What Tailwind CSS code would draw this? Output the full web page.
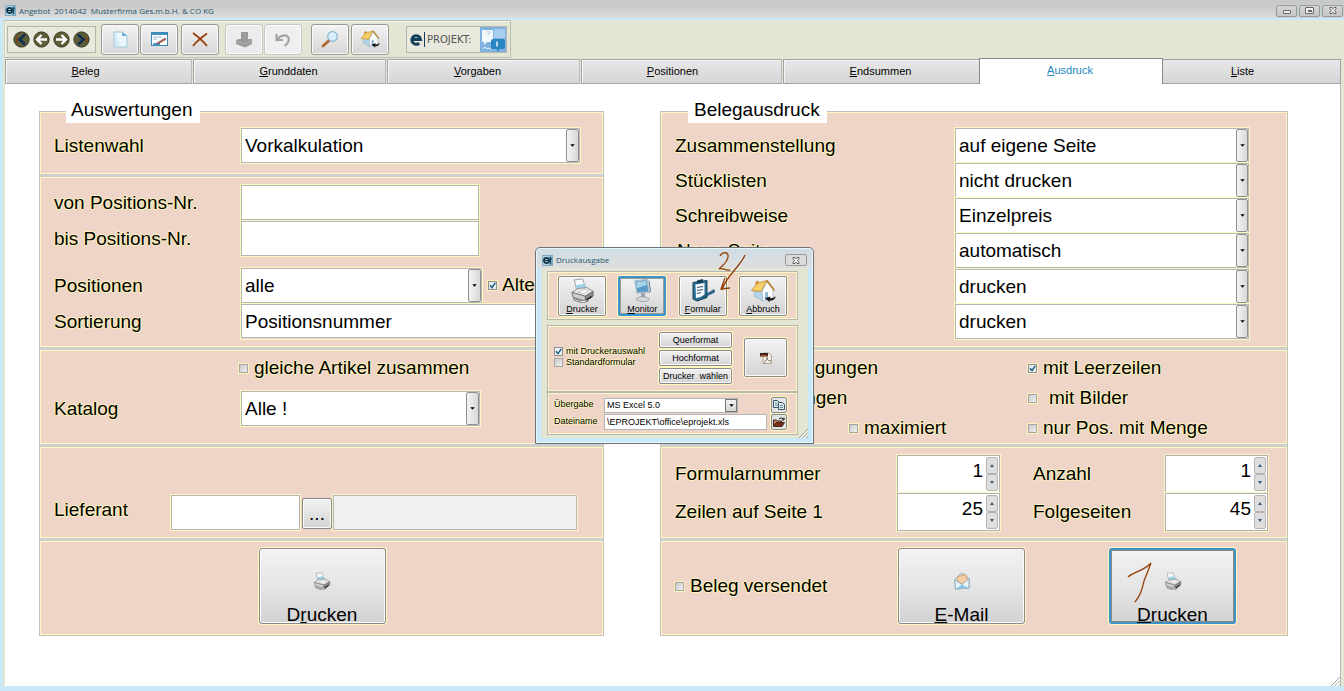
<!DOCTYPE html>
<html lang="de">
<head>
<meta charset="utf-8">
<title>Angebot 2014042 Musterfirma Ges.m.b.H. &amp; CO KG</title>
<script src="https://cdn.jsdelivr.net/npm/@tailwindcss/browser@4"></script>
</head>
<body class="relative flex min-h-screen flex-col overflow-x-hidden bg-[#e4e6d4] font-['Liberation_Sans',Arial,sans-serif] text-[19px] text-black">

<!-- Shared symbols -->
<svg class="hidden" aria-hidden="true">
  <symbol id="app" viewBox="0 0 11 11"><rect width="11" height="11" fill="#7fa9bd"/><rect x="1" y="1" width="6" height="9" fill="#b5d8e8"/><circle cx="4.500" cy="5.500" r="2.600" fill="none" stroke="#0c3347" stroke-width="1.700"/><path d="M2.500 5.500h4.500" stroke="#0c3347" stroke-width="1.200"/><path d="M8.500 2v7M7.500 4h2.500" stroke="#0f4a68" stroke-width="1"/></symbol>
  <symbol id="tick" viewBox="0 0 9 9"><path d="M2 4.300 4 6.600 7.300 1.800" fill="none" stroke="#1f5f80" stroke-width="1.500"/></symbol>
  <symbol id="down" viewBox="0 0 6 4"><path d="M0 .3h6L3 3.700z" fill="#000"/></symbol>
  <symbol id="printer" viewBox="0 0 26 26">
    <path d="M4.500 2 13 1l4 11-10 1z" fill="#f4f9fc" stroke="#8a8f94" stroke-width=".8"/>
    <path d="M6 7.500 14.800 6l2.200 6-9.500 1z" fill="#9fd0ec"/>
    <path d="M2 15 8 11l10-1 6 4-8 5z" fill="#e9e9e9" stroke="#777" stroke-width=".8"/>
    <path d="M2 15l14 4v5L3 20z" fill="#cfcfcf" stroke="#666" stroke-width=".8"/>
    <path d="M16 19l8-5v5l-8 5z" fill="#8c8c8c" stroke="#555" stroke-width=".8"/>
    <path d="M4 21l7 3 5-1 3 1-6 2-9-3z" fill="#fff" stroke="#555" stroke-width=".8"/>
    <path d="M8 14.500l8-2.500 3 1.500-5 2.800z" fill="#fff" stroke="#999" stroke-width=".5"/>
    <path d="M17.500 21.500l5-3v1.800l-5 3z" fill="#222"/>
  </symbol>
  <symbol id="house" viewBox="0 0 26 26">
    <path d="M4 12 12 12 13 23 4.500 18.500z" fill="#b4d3e8" stroke="#88a9c0" stroke-width=".6"/>
    <path d="M12 13 17 4l6 8v8l-10 3z" fill="#fafcfd" stroke="#9db4c4" stroke-width=".7"/>
    <path d="M5.500 3.500 8.500 2.500v4l-3 1z" fill="#d98a3a"/>
    <path d="M1.500 12.500 7 5.500 17 2.500 11 13.500z" fill="#f5d069" stroke="#b98323" stroke-width=".8"/>
    <path d="M17 2.500 24.500 12.500" stroke="#b98323" stroke-width="1.600" fill="none"/>
    <path d="M15 14.500l3-.6v7.200l-3 .9z" fill="#8eb9d8"/>
    <path d="M25.500 18c0 3.500-3 5-6 4.300l.4 2-5-4 5.600-1.800-.4 1.700c2 .3 4-.4 5.400-2.200z" fill="#111"/>
  </symbol>
  <symbol id="close" viewBox="0 0 8 7"><path d="M1 .5h2l1 1.300L5 .5h2v1.200L5.600 3.500 7 5.300v1.200H5L4 5.200 3 6.500H1V5.300l1.400-1.800L1 1.700z" fill="#eee" stroke="#555" stroke-width=".9"/></symbol>
  <symbol id="grip" viewBox="0 0 10 10"><path d="M0 10 10 0M4 10l6-6M8 10l2-2" stroke="#9a9a9a" stroke-width="1"/><path d="M1.500 10 10 1.500M5.500 10 10 5.500" stroke="#fff" stroke-width="1"/></symbol>
</svg>

<header class="flex h-[20px] items-center border-b-2 border-[#c9e8fa] bg-linear-to-b from-[#c9c9c9] from-30% to-[#dddddd] pt-[3px] pl-[5px] pr-px font-['Open_Sans',sans-serif] text-[8px] text-[#27566c]">
  <svg class="mr-[3px] size-[11px]"><use href="#app"/></svg>
  <h1 class="whitespace-pre">Angebot  2014042  Musterfirma Ges.m.b.H. &amp; CO KG</h1>
  <div class="ml-auto flex gap-[2px]">
    <button aria-label="Minimieren" class="grid h-[12px] w-[21px] place-items-center rounded-[2px] border border-[#999] bg-linear-to-b from-[#d6d6d6] to-[#c6c6c6] shadow-[0_0_0_1px_#c3d3d3]"><span class="mt-[2px] h-[4px] w-[8px] rounded-[1px] border border-[#666] bg-[#eee]"></span></button>
    <button aria-label="Maximieren" class="grid h-[12px] w-[21px] place-items-center rounded-[2px] border border-[#999] bg-linear-to-b from-[#d6d6d6] to-[#c6c6c6] shadow-[0_0_0_1px_#c3d3d3]"><span class="grid h-[7px] w-[9px] place-items-center rounded-[1px] border border-[#666] bg-[#eee]"><span class="h-[2px] w-[4px] bg-[#666]"></span></span></button>
    <button aria-label="Schließen" class="grid h-[12px] w-[21px] place-items-center rounded-[2px] border border-[#999] bg-linear-to-b from-[#d6d6d6] to-[#c6c6c6] shadow-[0_0_0_1px_#c3d3d3]"><svg class="h-[7px] w-[8px]"><use href="#close"/></svg></button>
  </div>
</header>

<div class="flex grow flex-col border-b-[5px] border-l-[3px] border-[#c9e8fa] pl-px pr-[3px]">

  <!-- Toolbar -->
  <div class="flex h-[38px] w-[507px] items-center self-start border border-[#bdbdb5] border-l-[#cfd0c4] pl-[2px] shadow-[inset_1px_1px_0_#f3f4ea]" role="toolbar">
    <div class="flex h-[27px] w-[89px] shrink-0 items-center justify-center gap-[3px] border border-[#b5b5ae] bg-[#e8e9dc]">
      <button aria-label="Erster"><svg class="size-[17px]" viewBox="0 0 17 17"><circle cx="8.500" cy="8.500" r="7.600" fill="#5d5d38" stroke="#33331c"/><path d="M12 3.500 6.500 8.500 12 13.500" fill="none" stroke="#0d2f57" stroke-width="2.600"/><path d="M3.800 5v7" stroke="#8a3a14" stroke-width="1.300"/></svg></button>
      <button aria-label="Zurück"><svg class="size-[17px]" viewBox="0 0 17 17"><circle cx="8.500" cy="8.500" r="7.600" fill="#5d5d38" stroke="#33331c"/><path d="M14 8.500H4.500M8.500 4 4 8.500 8.500 13" fill="none" stroke="#fff" stroke-width="2.400"/></svg></button>
      <button aria-label="Weiter"><svg class="size-[17px]" viewBox="0 0 17 17"><circle cx="8.500" cy="8.500" r="7.600" fill="#5d5d38" stroke="#33331c"/><path d="M3 8.500h9.500M8.500 4 13 8.500 8.500 13" fill="none" stroke="#fff" stroke-width="2.400"/></svg></button>
      <button aria-label="Letzter"><svg class="size-[17px]" viewBox="0 0 17 17"><circle cx="8.500" cy="8.500" r="7.600" fill="#5d5d38" stroke="#33331c"/><path d="M5 3.500 10.500 8.500 5 13.500" fill="none" stroke="#0d2f57" stroke-width="2.600"/><path d="M13.200 5v7" stroke="#8a3a14" stroke-width="1.300"/></svg></button>
    </div>
    <button aria-label="Neu" class="ml-[5px] grid h-[31px] w-[38px] place-items-center rounded-[3px] border border-[#999] bg-linear-to-b from-[#f3f3f3] to-[#d6d6d6] shadow-[inset_0_0_0_1px_#fafafa]"><svg class="h-[17px] w-[15px]" viewBox="0 0 15 17"><path d="M1 1h8l5 4v11H1z" fill="#eaf6fc" stroke="#9cc7dc"/><path d="M9 1v4h5z" fill="#5fb0da"/><path d="M2 3v12h5z" fill="#cfe8f4"/></svg></button>
    <button aria-label="Bearbeiten" class="ml-px grid h-[31px] w-[38px] place-items-center rounded-[3px] border border-[#999] bg-linear-to-b from-[#f3f3f3] to-[#d6d6d6] shadow-[inset_0_0_0_1px_#fafafa]"><svg class="h-[14px] w-[17px]" viewBox="0 0 17 14"><rect x=".5" y=".5" width="16" height="13" fill="#fff" stroke="#3e86b0"/><path d="M1 2h15" stroke="#3f93c4" stroke-width="2"/><path d="M2 5h9M2 7h4" stroke="#99b7c9"/><path d="M2 12h7" stroke="#4aa0d0" stroke-width="2"/><path d="M5 11.500 14 6l1 1.500L7 12z" fill="#c26b3e" stroke="#5f3b6a" stroke-width=".5"/></svg></button>
    <button aria-label="Löschen" class="ml-[3px] grid h-[31px] w-[38px] place-items-center rounded-[3px] border border-[#999] bg-linear-to-b from-[#f3f3f3] to-[#d6d6d6] shadow-[inset_0_0_0_1px_#fafafa]"><svg class="h-[15px] w-[16px]" viewBox="0 0 16 15"><path d="M1 1c4 3 10 8 14 13M15 1.500C10 5 5 9 1 14" fill="none" stroke="#9a3d08" stroke-width="1.700"/></svg></button>
    <button aria-label="Ablegen" disabled class="ml-[6px] grid h-[31px] w-[38px] place-items-center rounded-[3px] border border-[#c8c8c8] bg-[#ececec] shadow-[inset_0_0_0_1px_#fafafa]"><svg class="h-[17px] w-[18px]" viewBox="0 0 18 17"><path d="M6 1h7v7h4v5l-7 3.500L1 13V9l3-1h2z" fill="#9b9b9b"/><path d="M1 10l9 3 7-3" fill="none" stroke="#b5b5b5" stroke-width=".8"/></svg></button>
    <button aria-label="Rückgängig" disabled class="ml-px grid h-[31px] w-[38px] place-items-center rounded-[3px] border border-[#c8c8c8] bg-[#efefef] shadow-[inset_0_0_0_1px_#fafafa]"><svg class="h-[15px] w-[16px]" viewBox="0 0 16 15"><path d="M1.500 2v6h6.500M2 8c3-5 9-6 11-3s0 6-3.500 9" fill="none" stroke="#a3a3a3" stroke-width="2.200"/></svg></button>
    <button aria-label="Suchen" class="ml-[9px] grid h-[31px] w-[38px] place-items-center rounded-[3px] border border-[#999] bg-linear-to-b from-[#f3f3f3] to-[#d6d6d6] shadow-[inset_0_0_0_1px_#fafafa]"><svg class="h-[17px] w-[18px]" viewBox="0 0 18 17"><path d="M8 9.500 2 15" stroke="#b0662e" stroke-width="2.600" stroke-linecap="round"/><circle cx="11.500" cy="5.500" r="4.800" fill="#d8eefa" stroke="#86b2cd" stroke-width="1.200"/><path d="M9 4.500c1-1.500 2.500-2 4-1.500" stroke="#fff" fill="none"/></svg></button>
    <button aria-label="Beenden" class="ml-[2px] grid h-[31px] w-[38px] place-items-center rounded-[3px] border border-[#999] bg-linear-to-b from-[#f3f3f3] to-[#d6d6d6] shadow-[inset_0_0_0_1px_#fafafa]"><svg class="size-[20px]"><use href="#house"/></svg></button>
    <div class="ml-[17px] flex h-[27px] w-[101px] shrink-0 items-center border border-[#b5b5ae] bg-[#e8e9dc] pl-[3px]">
      <svg class="h-[15px] w-[15px] shrink-0" viewBox="0 0 15 15"><path d="M1.500 7.500h9a4.300 4.300 0 1 0-1.300 3.600" fill="none" stroke="#12405c" stroke-width="3"/><path d="M14.500 0v15" stroke="#12405c"/></svg>
      <span class="ml-[2px] pt-[2px] font-['DejaVu_Sans',sans-serif] text-[10px] leading-none text-[#555]">PROJEKT:</span>
      <svg class="ml-auto h-[25px] w-[26px] shrink-0" viewBox="0 0 26 25"><rect width="26" height="25" fill="#7fb2de"/><path d="M2 3h11v12H7l-3 3v-3H2z" fill="#f2f8fc"/><path d="M14 2h11v9H14z" fill="#a9cdec"/><path d="M11 14q0-2 2-2h9q3 0 3 2v6q0 2-2 2h-3l-3 3v-3h-4q-2 0-2-2z" fill="#2a86c2"/><text x="6" y="9" font-size="7" fill="#8eb4d0" font-family="Liberation Sans">?</text><path d="M17 14.500v5" stroke="#fff" stroke-width="1.400"/><path d="M3 22l2-2 2 2 2-1 2 2" stroke="#eaf4fb" fill="none"/></svg>
    </div>
  </div>

  <!-- Tabs: the right padding sets each caption a little left of centre -->
  <nav class="grid h-[26px] grid-cols-[188fr_194fr_194fr_202fr_196fr_184fr_178fr] items-end pl-px text-[11px]" role="tablist">
    <button role="tab" class="mr-px h-[25px] border border-[#a3a3a3] border-r-[#bbb] bg-linear-to-b from-[#e8e8e8] to-[#d5d5d5] pr-[26px] shadow-[inset_1px_1px_0_#f6f6f6]"><u>B</u>eleg</button>
    <button role="tab" class="mr-px h-[25px] border border-[#a3a3a3] border-r-[#bbb] bg-linear-to-b from-[#e8e8e8] to-[#d5d5d5] pr-[2px] shadow-[inset_1px_1px_0_#f6f6f6]"><u>G</u>runddaten</button>
    <button role="tab" class="mr-px h-[25px] border border-[#a3a3a3] border-r-[#bbb] bg-linear-to-b from-[#e8e8e8] to-[#d5d5d5] pr-[12px] shadow-[inset_1px_1px_0_#f6f6f6]"><u>V</u>orgaben</button>
    <button role="tab" class="mr-px h-[25px] border border-[#a3a3a3] border-r-[#bbb] bg-linear-to-b from-[#e8e8e8] to-[#d5d5d5] pr-[18px] shadow-[inset_1px_1px_0_#f6f6f6]"><u>P</u>ositionen</button>
    <button role="tab" class="h-[25px] border border-r-0 border-[#a3a3a3] bg-linear-to-b from-[#e8e8e8] to-[#d5d5d5] pr-[2px] shadow-[inset_1px_1px_0_#f6f6f6]"><u>E</u>ndsummen</button>
    <button role="tab" aria-selected="true" class="h-[26px] border border-b-0 border-[#888] bg-white pb-[2px] pr-[2px] text-[#2486c0]"><u>A</u>usdruck</button>
    <button role="tab" class="h-[25px] border border-l-0 border-[#a3a3a3] bg-linear-to-b from-[#e8e8e8] to-[#d5d5d5] pr-[18px]"><u>L</u>iste</button>
  </nav>

  <main class="relative ml-px grid grow grid-cols-[minmax(0,565fr)_minmax(0,628fr)] content-start gap-x-[56px] border-r border-[#b8b8b8] bg-white pb-[20px] pl-[34px] pr-[52px] pt-[27px]">

    <!-- Auswertungen -->
    <section class="relative flex flex-col gap-[3px] border border-[#c0c0c0] bg-[#cfcfcf] [&_label]:[text-shadow:1px_0_0_#fbf3b8,-1px_0_0_#fbf3b8,0_1px_0_#fbf3b8,0_-1px_0_#fbf3b8]">
      <h2 class="absolute -top-[14px] left-[26px] h-[25px] bg-white pl-[5px] pr-[8px] leading-[24px]">Auswertungen</h2>

      <div class="flex min-h-[62px] items-start border border-[#fdf8bd] bg-[#efd5c8] pl-[13px] pr-[22px] pt-[15px]">
        <label for="liste" class="w-[187px] leading-[35px]">Listenwahl</label>
        <div class="relative grow shadow-[0_0_0_1px_#fdf8bd]"><select id="liste" class="block h-[35px] w-full appearance-none border border-[#b5b5b5] bg-white pl-[3px] pt-[2px]"><option>Vorkalkulation</option></select><span class="pointer-events-none absolute inset-y-px right-px grid w-[13px] place-items-center rounded-[2px] border border-[#8f8f8f] bg-linear-to-r from-[#f3f3f3] to-[#d8d8d8]"><svg class="h-[3px] w-[5px]"><use href="#down"/></svg></span></div>
      </div>

      <div class="flex min-h-[170px] flex-col gap-px border border-[#fdf8bd] bg-[#efd5c8] pl-[13px] pr-[22px] pt-[7px]">
        <div class="flex"><label for="von" class="w-[187px] leading-[35px]">von Positions-Nr.</label><input id="von" class="h-[35px] w-[238px] border border-[#b5b5b5] bg-white px-[3px] shadow-[0_0_0_1px_#fdf8bd]"></div>
        <div class="flex"><label for="bis" class="w-[187px] leading-[35px]">bis Positions-Nr.</label><input id="bis" class="h-[35px] w-[238px] border border-[#b5b5b5] bg-white px-[3px] shadow-[0_0_0_1px_#fdf8bd]"></div>
        <div class="mt-[11px] flex"><label for="pos" class="w-[187px] shrink-0 leading-[35px]">Positionen</label>
          <div class="relative w-[241px] shrink-0 shadow-[0_0_0_1px_#fdf8bd]"><select id="pos" class="block h-[35px] w-full appearance-none border border-[#b5b5b5] bg-white pl-[3px] pt-[2px]"><option>alle</option></select><span class="pointer-events-none absolute inset-y-px right-px grid w-[13px] place-items-center rounded-[2px] border border-[#8f8f8f] bg-linear-to-r from-[#f3f3f3] to-[#d8d8d8]"><svg class="h-[3px] w-[5px]"><use href="#down"/></svg></span></div>
          <label class="ml-[6px] flex items-center gap-[5px]"><span class="grid size-[9px] *:col-start-1 *:row-start-1"><input type="checkbox" checked class="peer size-[9px] appearance-none border border-[#8e9297] bg-[#e6eaec] shadow-[0_0_0_1px_#fbf3b8]"><svg class="pointer-events-none hidden size-[9px] peer-checked:block"><use href="#tick"/></svg></span>Alternativ</label>
        </div>
        <div class="flex"><label for="sort" class="w-[187px] leading-[35px]">Sortierung</label>
          <div class="relative grow shadow-[0_0_0_1px_#fdf8bd]"><select id="sort" class="block h-[34px] w-full appearance-none border border-[#b5b5b5] bg-white pl-[3px] pt-[2px]"><option>Positionsnummer</option></select><span class="pointer-events-none absolute inset-y-px right-px grid w-[13px] place-items-center rounded-[2px] border border-[#8f8f8f] bg-linear-to-r from-[#f3f3f3] to-[#d8d8d8]"><svg class="h-[3px] w-[5px]"><use href="#down"/></svg></span></div></div>
      </div>

      <div class="flex min-h-[94px] flex-col gap-[6px] border border-[#fdf8bd] bg-[#efd5c8] pl-[13px] pr-[22px]">
        <label class="ml-[185px] flex h-[34px] items-center gap-[6px]"><span class="grid size-[9px] *:col-start-1 *:row-start-1"><input type="checkbox" class="peer size-[9px] appearance-none border border-[#a5a5a5] bg-linear-to-br from-[#c9c9c9] to-[#f2f2f2] shadow-[0_0_0_1px_#fbf3b8]"><svg class="pointer-events-none hidden size-[9px] peer-checked:block"><use href="#tick"/></svg></span>gleiche Artikel zusammen</label>
        <div class="flex"><label for="kat" class="w-[187px] leading-[35px]">Katalog</label>
          <div class="relative w-[239px] shadow-[0_0_0_1px_#fdf8bd]"><select id="kat" class="block h-[35px] w-full appearance-none border border-[#b5b5b5] bg-white pl-[3px] pt-[2px]"><option>Alle !</option></select><span class="pointer-events-none absolute inset-y-px right-px grid w-[13px] place-items-center rounded-[2px] border border-[#8f8f8f] bg-linear-to-r from-[#f3f3f3] to-[#d8d8d8]"><svg class="h-[3px] w-[5px]"><use href="#down"/></svg></span></div></div>
      </div>

      <div class="flex min-h-[91px] items-start border border-[#fdf8bd] bg-[#efd5c8] pl-[13px] pr-[25px] pt-[47px]">
        <label for="lief" class="w-[117px] shrink-0 leading-[30px]">Lieferant</label>
        <input id="lief" class="h-[35px] w-[129px] shrink-0 border border-[#b5b5b5] bg-white px-[3px] shadow-[0_0_0_1px_#fdf8bd]">
        <button aria-label="Lieferant suchen" class="ml-[2px] mr-px mt-[3px] h-[31px] w-[30px] shrink-0 rounded-[2px] border border-[#8a8a8a] bg-linear-to-b from-[#f2f2f2] to-[#d4d4d4] leading-none shadow-[inset_0_0_0_1px_#fafafa]">...</button>
        <input aria-label="Lieferantenname" disabled class="h-[35px] min-w-0 grow border border-[#b5b5b5] bg-[#f0f0f0] shadow-[0_0_0_1px_#fdf8bd]">
      </div>

      <div class="flex min-h-[94px] items-start justify-center border border-[#fdf8bd] bg-[#efd5c8] pl-px pt-[6px]">
        <button class="flex h-[76px] w-[127px] flex-col items-center justify-end rounded-[3px] border border-[#8a8a8a] bg-linear-to-b from-[#f2f2f2] via-[#e6e6e6] via-48% to-[#d2d2d2] shadow-[inset_0_0_0_1px_#fafafa,0_0_0_1px_#fdf8bd]"><svg class="mb-[17px] size-[18px]"><use href="#printer"/></svg><span class="h-[16px] leading-[16px]">D<u>r</u>ucken</span></button>
      </div>
    </section>

    <!-- Belegausdruck -->
    <section class="relative flex flex-col gap-[3px] border border-[#c0c0c0] bg-[#cfcfcf] [&_label]:[text-shadow:1px_0_0_#fbf3b8,-1px_0_0_#fbf3b8,0_1px_0_#fbf3b8,0_-1px_0_#fbf3b8]">
      <h2 class="absolute -top-[14px] left-[27px] h-[25px] bg-white pl-[6px] pr-[7px] leading-[24px]">Belegausdruck</h2>

      <div class="flex min-h-[235px] flex-col border border-[#fdf8bd] bg-[#efd5c8] pl-[13px] pr-[37px] pt-[15px]">
        <div class="flex"><label for="zus" class="w-[280px] leading-[35px]">Zusammenstellung</label><div class="relative grow shadow-[0_0_0_1px_#fdf8bd]"><select id="zus" class="block h-[35px] w-full appearance-none border border-[#b5b5b5] bg-white pl-[3px] pt-[2px]"><option>auf eigene Seite</option></select><span class="pointer-events-none absolute inset-y-px right-px grid w-[12px] place-items-center rounded-[2px] border border-[#8f8f8f] bg-linear-to-r from-[#f3f3f3] to-[#d8d8d8]"><svg class="h-[3px] w-[5px]"><use href="#down"/></svg></span></div></div>
        <div class="flex"><label for="stk" class="w-[280px] leading-[35px]">Stücklisten</label><div class="relative grow shadow-[0_0_0_1px_#fdf8bd]"><select id="stk" class="block h-[35px] w-full appearance-none border border-[#b5b5b5] bg-white pl-[3px] pt-[2px]"><option>nicht drucken</option></select><span class="pointer-events-none absolute inset-y-px right-px grid w-[12px] place-items-center rounded-[2px] border border-[#8f8f8f] bg-linear-to-r from-[#f3f3f3] to-[#d8d8d8]"><svg class="h-[3px] w-[5px]"><use href="#down"/></svg></span></div></div>
        <div class="flex"><label for="schr" class="w-[280px] leading-[35px]">Schreibweise</label><div class="relative grow shadow-[0_0_0_1px_#fdf8bd]"><select id="schr" class="block h-[35px] w-full appearance-none border border-[#b5b5b5] bg-white pl-[3px] pt-[2px]"><option>Einzelpreis</option></select><span class="pointer-events-none absolute inset-y-px right-px grid w-[12px] place-items-center rounded-[2px] border border-[#8f8f8f] bg-linear-to-r from-[#f3f3f3] to-[#d8d8d8]"><svg class="h-[3px] w-[5px]"><use href="#down"/></svg></span></div></div>
        <div class="flex"><label for="neu" class="w-[280px] pl-[2px] leading-[35px]">Neue Seite</label><div class="relative grow shadow-[0_0_0_1px_#fdf8bd]"><select id="neu" class="block h-[35px] w-full appearance-none border border-[#b5b5b5] bg-white pl-[3px] pt-[2px]"><option>automatisch</option></select><span class="pointer-events-none absolute inset-y-px right-px grid w-[12px] place-items-center rounded-[2px] border border-[#8f8f8f] bg-linear-to-r from-[#f3f3f3] to-[#d8d8d8]"><svg class="h-[3px] w-[5px]"><use href="#down"/></svg></span></div></div>
        <div class="mt-px flex pl-[280px]"><div class="relative grow shadow-[0_0_0_1px_#fdf8bd]"><select aria-label="Druckoption 1" class="block h-[35px] w-full appearance-none border border-[#b5b5b5] bg-white pl-[3px] pt-[2px]"><option>drucken</option></select><span class="pointer-events-none absolute inset-y-px right-px grid w-[12px] place-items-center rounded-[2px] border border-[#8f8f8f] bg-linear-to-r from-[#f3f3f3] to-[#d8d8d8]"><svg class="h-[3px] w-[5px]"><use href="#down"/></svg></span></div></div>
        <div class="flex pl-[280px]"><div class="relative grow shadow-[0_0_0_1px_#fdf8bd]"><select aria-label="Druckoption 2" class="block h-[35px] w-full appearance-none border border-[#b5b5b5] bg-white pl-[3px] pt-[2px]"><option>drucken</option></select><span class="pointer-events-none absolute inset-y-px right-px grid w-[12px] place-items-center rounded-[2px] border border-[#8f8f8f] bg-linear-to-r from-[#f3f3f3] to-[#d8d8d8]"><svg class="h-[3px] w-[5px]"><use href="#down"/></svg></span></div></div>
      </div>

      <div class="grid min-h-[94px] auto-rows-[30px] grid-cols-[174px_179px_1fr] border border-[#fdf8bd] bg-[#efd5c8] pl-[13px] pt-[2px]">
        <label class="col-span-2 flex items-center gap-[6px]"><span class="grid size-[9px] *:col-start-1 *:row-start-1"><input type="checkbox" class="peer size-[9px] appearance-none border border-[#a5a5a5] bg-linear-to-br from-[#c9c9c9] to-[#f2f2f2]"><svg class="pointer-events-none hidden size-[9px] peer-checked:block"><use href="#tick"/></svg></span>Zahlungsbedingungen</label>
        <label class="flex items-center gap-[6px]"><span class="grid size-[9px] *:col-start-1 *:row-start-1"><input type="checkbox" checked class="peer size-[9px] appearance-none border border-[#8e9297] bg-[#e6eaec] shadow-[0_0_0_1px_#fbf3b8]"><svg class="pointer-events-none hidden size-[9px] peer-checked:block"><use href="#tick"/></svg></span>mit Leerzeilen</label>
        <label class="col-span-2 flex items-center gap-[6px]"><span class="grid size-[9px] *:col-start-1 *:row-start-1"><input type="checkbox" class="peer size-[9px] appearance-none border border-[#a5a5a5] bg-linear-to-br from-[#c9c9c9] to-[#f2f2f2]"><svg class="pointer-events-none hidden size-[9px] peer-checked:block"><use href="#tick"/></svg></span>Lieferbedingungen</label>
        <label class="flex items-center gap-[12px]"><span class="grid size-[9px] *:col-start-1 *:row-start-1"><input type="checkbox" class="peer size-[9px] appearance-none border border-[#a5a5a5] bg-linear-to-br from-[#c9c9c9] to-[#f2f2f2] shadow-[0_0_0_1px_#fbf3b8]"><svg class="pointer-events-none hidden size-[9px] peer-checked:block"><use href="#tick"/></svg></span>mit Bilder</label>
        <label class="col-start-2 flex items-center gap-[6px]"><span class="grid size-[9px] *:col-start-1 *:row-start-1"><input type="checkbox" class="peer size-[9px] appearance-none border border-[#a5a5a5] bg-linear-to-br from-[#c9c9c9] to-[#f2f2f2] shadow-[0_0_0_1px_#fbf3b8]"><svg class="pointer-events-none hidden size-[9px] peer-checked:block"><use href="#tick"/></svg></span>maximiert</label>
        <label class="flex items-center gap-[6px]"><span class="grid size-[9px] *:col-start-1 *:row-start-1"><input type="checkbox" class="peer size-[9px] appearance-none border border-[#a5a5a5] bg-linear-to-br from-[#c9c9c9] to-[#f2f2f2] shadow-[0_0_0_1px_#fbf3b8]"><svg class="pointer-events-none hidden size-[9px] peer-checked:block"><use href="#tick"/></svg></span>nur Pos. mit Menge</label>
      </div>

      <div class="grid min-h-[91px] auto-rows-[38px] grid-cols-[222px_136px_132px_102px] border border-[#fdf8bd] bg-[#efd5c8] pl-[13px] pt-[7px]">
        <label for="form" class="leading-[38px]">Formularnummer</label>
        <div class="flex w-[103px] border border-[#b0b0b0] bg-white p-px shadow-[0_0_0_1px_#fdf8bd]"><input id="form" value="1" inputmode="numeric" class="min-w-0 grow pb-[6px] pr-[3px] text-right"><div class="flex w-[12px] shrink-0 flex-col"><button aria-label="mehr" class="grid grow place-items-center rounded-[2px] border border-[#b5b5b5] bg-[#dedede]"><svg class="h-[3px] w-[4px]" viewBox="0 0 4 3"><path d="M0 3h4L2 0z" fill="#335a7a"/></svg></button><button aria-label="weniger" class="grid grow place-items-center rounded-[2px] border border-[#b5b5b5] bg-[#dedede]"><svg class="h-[3px] w-[4px]" viewBox="0 0 4 3"><path d="M0 0h4L2 3z" fill="#335a7a"/></svg></button></div></div>
        <label for="anz" class="leading-[38px]">Anzahl</label>
        <div class="flex w-[103px] border border-[#b0b0b0] bg-white p-px shadow-[0_0_0_1px_#fdf8bd]"><input id="anz" value="1" inputmode="numeric" class="min-w-0 grow pb-[6px] pr-[3px] text-right"><div class="flex w-[12px] shrink-0 flex-col"><button aria-label="mehr" class="grid grow place-items-center rounded-[2px] border border-[#b5b5b5] bg-[#dedede]"><svg class="h-[3px] w-[4px]" viewBox="0 0 4 3"><path d="M0 3h4L2 0z" fill="#335a7a"/></svg></button><button aria-label="weniger" class="grid grow place-items-center rounded-[2px] border border-[#b5b5b5] bg-[#dedede]"><svg class="h-[3px] w-[4px]" viewBox="0 0 4 3"><path d="M0 0h4L2 3z" fill="#335a7a"/></svg></button></div></div>
        <label for="zeil" class="leading-[38px]">Zeilen auf Seite 1</label>
        <div class="flex w-[103px] border border-[#b0b0b0] bg-white p-px shadow-[0_0_0_1px_#fdf8bd]"><input id="zeil" value="25" inputmode="numeric" class="min-w-0 grow pb-[6px] pr-[3px] text-right"><div class="flex w-[12px] shrink-0 flex-col"><button aria-label="mehr" class="grid grow place-items-center rounded-[2px] border border-[#b5b5b5] bg-[#dedede]"><svg class="h-[3px] w-[4px]" viewBox="0 0 4 3"><path d="M0 3h4L2 0z" fill="#335a7a"/></svg></button><button aria-label="weniger" class="grid grow place-items-center rounded-[2px] border border-[#b5b5b5] bg-[#dedede]"><svg class="h-[3px] w-[4px]" viewBox="0 0 4 3"><path d="M0 0h4L2 3z" fill="#335a7a"/></svg></button></div></div>
        <label for="folg" class="leading-[38px]">Folgeseiten</label>
        <div class="flex w-[103px] border border-[#b0b0b0] bg-white p-px shadow-[0_0_0_1px_#fdf8bd]"><input id="folg" value="45" inputmode="numeric" class="min-w-0 grow pb-[6px] pr-[3px] text-right"><div class="flex w-[12px] shrink-0 flex-col"><button aria-label="mehr" class="grid grow place-items-center rounded-[2px] border border-[#b5b5b5] bg-[#dedede]"><svg class="h-[3px] w-[4px]" viewBox="0 0 4 3"><path d="M0 3h4L2 0z" fill="#335a7a"/></svg></button><button aria-label="weniger" class="grid grow place-items-center rounded-[2px] border border-[#b5b5b5] bg-[#dedede]"><svg class="h-[3px] w-[4px]" viewBox="0 0 4 3"><path d="M0 0h4L2 3z" fill="#335a7a"/></svg></button></div></div>
      </div>

      <div class="flex min-h-[94px] items-start border border-[#fdf8bd] bg-[#efd5c8] pl-[13px] pr-[50px] pt-[6px]">
        <label class="flex h-[76px] w-[223px] items-center gap-[6px]"><span class="grid size-[9px] *:col-start-1 *:row-start-1"><input type="checkbox" class="peer size-[9px] appearance-none border border-[#a5a5a5] bg-linear-to-br from-[#c9c9c9] to-[#f2f2f2] shadow-[0_0_0_1px_#fbf3b8]"><svg class="pointer-events-none hidden size-[9px] peer-checked:block"><use href="#tick"/></svg></span>Beleg versendet</label>
        <button class="flex h-[76px] w-[127px] flex-col items-center justify-end rounded-[3px] border border-[#8a8a8a] bg-linear-to-b from-[#f2f2f2] via-[#e6e6e6] via-48% to-[#d2d2d2] shadow-[inset_0_0_0_1px_#fafafa,0_0_0_1px_#fdf8bd]"><svg class="mb-[17px] h-[18px] w-[16px]" viewBox="0 0 16 18"><path d="M1 7.500 7.500 1 15 6.500V16L1.500 17z" fill="#dcebf4" stroke="#8fa5b3"/><path d="M3.500 4.500 12 2.500l1.500 6-5.500 4-5-4z" fill="#f3cda4" stroke="#c9905d" stroke-width=".7"/><path d="M1 8l7 4.500L15 7v9L1.500 17z" fill="#eaf5fb" stroke="#86a3b5" stroke-width=".8"/><path d="M1.500 17 8 12.500l7 3.500z" fill="#8cc6e6"/></svg><span class="h-[16px] leading-[16px]"><u>E</u>-Mail</span></button>
        <button class="relative ml-auto flex h-[76px] w-[127px] flex-col items-center justify-end rounded-[3px] border-2 border-[#3c94c8] bg-linear-to-b from-[#f2f2f2] via-[#e6e6e6] via-48% to-[#d2d2d2] shadow-[inset_0_0_0_1px_#8a8a8a,0_0_0_1px_#fdf8bd]"><svg class="mb-[17px] size-[18px]"><use href="#printer"/></svg><span class="h-[15px] leading-[16px]"><u>D</u>rucken</span>
          <svg class="absolute left-[16px] top-[12px] h-[42px] w-[27px]" viewBox="0 0 27 42"><path d="M1 15C6 10 17 9 24 1c-3 8-5 13-7 18-2 8-3 14-9 21" fill="none" stroke="#933f06" stroke-width="1.300"/></svg>
        </button>
      </div>
    </section>
    <svg class="absolute bottom-0 right-0 size-[9px]"><use href="#grip"/></svg>
  </main>
</div>

<!-- Dialog Druckausgabe -->
<div role="dialog" aria-labelledby="dlg" class="absolute left-[535px] top-[247px] flex w-[279px] flex-col rounded-t-[5px] border border-[#6c7378] bg-[#c9e8fa] px-[5px] pb-[5px] text-[9px] shadow-[inset_0_0_0_1px_#e6f6fd]">
  <div class="-mx-[4px] mt-px flex h-[19px] items-center gap-[3px] rounded-t-[4px] bg-linear-to-b from-[#cfdde4] to-[#dedede] px-[5px] pt-[3px] font-['Open_Sans',sans-serif] text-[8px] text-[#27566c]">
    <svg class="size-[11px]"><use href="#app"/></svg>
    <h2 id="dlg">Druckausgabe</h2>
    <button aria-label="Schließen" class="ml-auto grid h-[12px] w-[22px] place-items-center rounded-[2px] border border-[#999] bg-[#dcdcdc]"><svg class="h-[7px] w-[8px]"><use href="#close"/></svg></button>
  </div>
  <div class="relative flex flex-col bg-[#e4e6d4] pb-[3px] pl-[6px] pr-[10px] pt-[3px] [&_label]:[text-shadow:1px_0_0_#fbf3b8,-1px_0_0_#fbf3b8,0_1px_0_#fbf3b8,0_-1px_0_#fbf3b8]">
    <div class="flex h-[49px] justify-between border border-[#b5b5b5] bg-[#efd5c8] px-[10px] pt-[4px] shadow-[inset_0_0_0_1px_#fdf8bd]">
      <button class="flex h-[40px] w-[48px] flex-col items-center justify-between rounded-[2px] border border-[#8a8a8a] bg-linear-to-b from-[#f2f2f2] to-[#d4d4d4] pb-px leading-[10px] shadow-[inset_0_0_0_1px_#fafafa,0_0_0_1px_#fdf8bd]"><svg class="mt-px size-[25px]"><use href="#printer"/></svg><span><u>D</u>rucker</span></button>
      <button class="flex h-[40px] w-[48px] flex-col items-center justify-between rounded-[2px] border-2 border-[#3c94c8] bg-linear-to-b from-[#f2f2f2] to-[#d4d4d4] leading-[10px] shadow-[inset_0_0_0_1px_#999,0_0_0_1px_#fdf8bd]"><svg class="h-[25px] w-[20px]" viewBox="0 0 20 25"><path d="M3 3 15 1.500l2 12.500L5 15z" fill="#5a9ac6" stroke="#a8bcc9" stroke-width="1.300"/><path d="M4.500 4 14 3l.7 4L5 10z" fill="#a9d4ee"/><path d="M9 15h4v4H9z" fill="#9aa5ad"/><path d="M4 21c2-3 12-3 13 0s-10 4-13 0z" fill="#d3d9dd" stroke="#8a949b" stroke-width=".7"/><path d="M17 2.500l1.500 11-1.500 1" stroke="#64798a" fill="none"/></svg><span><u>M</u>onitor</span></button>
      <button class="flex h-[40px] w-[48px] flex-col items-center justify-between rounded-[2px] border border-[#8a8a8a] bg-linear-to-b from-[#f2f2f2] to-[#d4d4d4] pb-px leading-[10px] shadow-[inset_0_0_0_1px_#fafafa,0_0_0_1px_#fdf8bd]"><svg class="mt-px size-[25px]" viewBox="0 0 25 25"><path d="M3 4.500 17 2.500v17l-10 3.500-4-2z" fill="#2d7196" stroke="#173f58"/><path d="M5.500 6.500 14.500 5v13L6 20z" fill="#f5fafd"/><path d="M7 9.500l6-1M7 12.500l6-1M7 15.500l4-1" stroke="#456" stroke-width="1.200"/><path d="M7 2.500l6-1.500v3.500L7 5.500z" fill="#16405a"/><path d="M12 18.500l8-4.500 4-2.500.8 2.500-4 2-8 3.500z" fill="#26709a" stroke="#123a52" stroke-width=".6"/></svg><span><u>F</u>ormular</span></button>
      <button class="flex h-[40px] w-[48px] flex-col items-center justify-between rounded-[2px] border border-[#8a8a8a] bg-linear-to-b from-[#f2f2f2] to-[#d4d4d4] pb-px leading-[10px] shadow-[inset_0_0_0_1px_#fafafa,0_0_0_1px_#fdf8bd]"><svg class="mt-px size-[26px]"><use href="#house"/></svg><span><u>A</u>bbruch</span></button>
    </div>

    <div class="mt-[5px] flex h-[67px] items-start border border-[#b5b5b5] bg-[#efd5c8] pl-[6px] pr-[10px] pt-[6px] shadow-[inset_0_0_0_1px_#fdf8bd]">
      <div class="mt-[14px] flex w-[105px] flex-col">
        <label class="flex h-[11px] items-center gap-[3px] whitespace-nowrap"><span class="grid size-[9px] *:col-start-1 *:row-start-1"><input type="checkbox" checked class="peer size-[9px] appearance-none border border-[#8e9297] bg-[#eef3f5]"><svg class="pointer-events-none hidden size-[9px] peer-checked:block"><use href="#tick"/></svg></span>mit Druckerauswahl</label>
        <label class="flex h-[11px] items-center gap-[3px]"><span class="grid size-[9px] *:col-start-1 *:row-start-1"><input type="checkbox" class="peer size-[9px] appearance-none border border-[#a5a5a5] bg-linear-to-br from-[#c9c9c9] to-[#f2f2f2]"><svg class="pointer-events-none hidden size-[9px] peer-checked:block"><use href="#tick"/></svg></span>Standardformular</label>
      </div>
      <div class="flex w-[73px] flex-col gap-[2px]">
        <button class="h-[16px] rounded-[2px] border border-[#8a8a8a] bg-linear-to-b from-[#f2f2f2] to-[#d4d4d4] leading-none shadow-[inset_0_0_0_1px_#fafafa,0_0_0_1px_#fdf8bd]">Querformat</button>
        <button class="h-[16px] rounded-[2px] border border-[#8a8a8a] bg-linear-to-b from-[#f2f2f2] to-[#d4d4d4] leading-none shadow-[inset_0_0_0_1px_#fafafa,0_0_0_1px_#fdf8bd]">Hochformat</button>
        <button class="h-[16px] whitespace-pre rounded-[2px] border border-[#8a8a8a] bg-linear-to-b from-[#f2f2f2] to-[#d4d4d4] leading-none shadow-[inset_0_0_0_1px_#fafafa,0_0_0_1px_#fdf8bd]">Drucker  wählen</button>
      </div>
      <button aria-label="PDF" class="ml-auto mt-[6px] grid h-[39px] w-[43px] place-items-center rounded-[2px] border border-[#8a8a8a] bg-linear-to-b from-[#f2f2f2] to-[#d4d4d4] shadow-[inset_0_0_0_1px_#fafafa,0_0_0_1px_#fdf8bd]"><svg class="size-[12px]" viewBox="0 0 12 12"><path d="M3 1h6l2.500 2.500V11.500H3z" fill="#f4efe8" stroke="#9a8f80" stroke-width=".8"/><rect y="1" width="8" height="3.500" fill="#3b2119"/><path d="M1 3.800h6" stroke="#e0752a"/><path d="M4 10.500c3-2 3.500-5 3-5s0 3.500 4 3.500" fill="none" stroke="#6a5a4a" stroke-width=".9"/></svg></button>
    </div>

    <div class="flex h-[43px] flex-col gap-[1px] border border-[#b5b5b5] bg-[#efd5c8] pl-[6px] pr-[10px] pt-[4px] shadow-[inset_0_0_0_1px_#fdf8bd]">
      <div class="flex items-center"><label for="ueb" class="w-[50px]">Übergabe</label>
        <div class="relative w-[134px]"><select id="ueb" class="block h-[15px] w-full appearance-none border border-[#b5b5b5] bg-white pl-[2px] leading-none"><option>MS Excel 5.0</option></select><span class="pointer-events-none absolute inset-y-px right-px grid w-[12px] place-items-center border border-[#777] bg-linear-to-b from-[#f3f3f3] to-[#d4d4d4]"><svg class="h-[3px] w-[5px]"><use href="#down"/></svg></span></div>
        <button aria-label="Kopieren" class="ml-auto grid size-[16px] place-items-center rounded-[2px] border border-[#8a8a8a] bg-[#e4e4e4] shadow-[0_0_0_1px_#fdf8bd]"><svg class="h-[10px] w-[12px]" viewBox="0 0 12 10"><path d="M.5.500h4l2 2v5h-6z" fill="#dbe8ef" stroke="#3d5866"/><path d="M5.500 2.500h4l2 2v5h-6z" fill="#dbe8ef" stroke="#3d5866"/><path d="M2 3h2M2 5h3M7 5.500h3M7 7.500h3" stroke="#3d6f8a" stroke-width=".8"/></svg></button>
      </div>
      <div class="flex items-center"><label for="dat" class="w-[50px]">Dateiname</label>
        <input id="dat" value="\EPROJEKT\office\eprojekt.xls" class="h-[16px] w-[163px] border border-[#b5b5b5] bg-white px-[2px]">
        <button aria-label="Öffnen" class="ml-auto grid size-[16px] place-items-center rounded-[2px] border border-[#8a8a8a] bg-[#e4e4e4] shadow-[0_0_0_1px_#fdf8bd]"><svg class="h-[10px] w-[12px]" viewBox="0 0 12 10"><path d="M.5 9V3h3l1 1h4v2" fill="#c98e6a" stroke="#3f1d10"/><path d="M.5 9.500 3 5.500h8.500L9 9.500z" fill="#7a2e18" stroke="#2f130a" stroke-width=".8"/><path d="M6 2c2-1.500 4-1 5 .5M11 .5v2.500H9" fill="none" stroke="#111"/></svg></button>
      </div>
    </div>
    <svg class="absolute bottom-0 right-0 size-[9px]"><use href="#grip"/></svg>
  </div>
  <svg class="pointer-events-none absolute left-[180px] top-[3px] h-[42px] w-[32px]" viewBox="0 0 32 42"><path d="M4 5c3-5 9-4 8 1-1 6-6 9-9 12 3-2 6 2 11 1M29 4C24 16 10 25 6 39M9 27 5 38l9-1" fill="none" stroke="#933f06" stroke-width="1.300"/></svg>
</div>
</body>
</html>
